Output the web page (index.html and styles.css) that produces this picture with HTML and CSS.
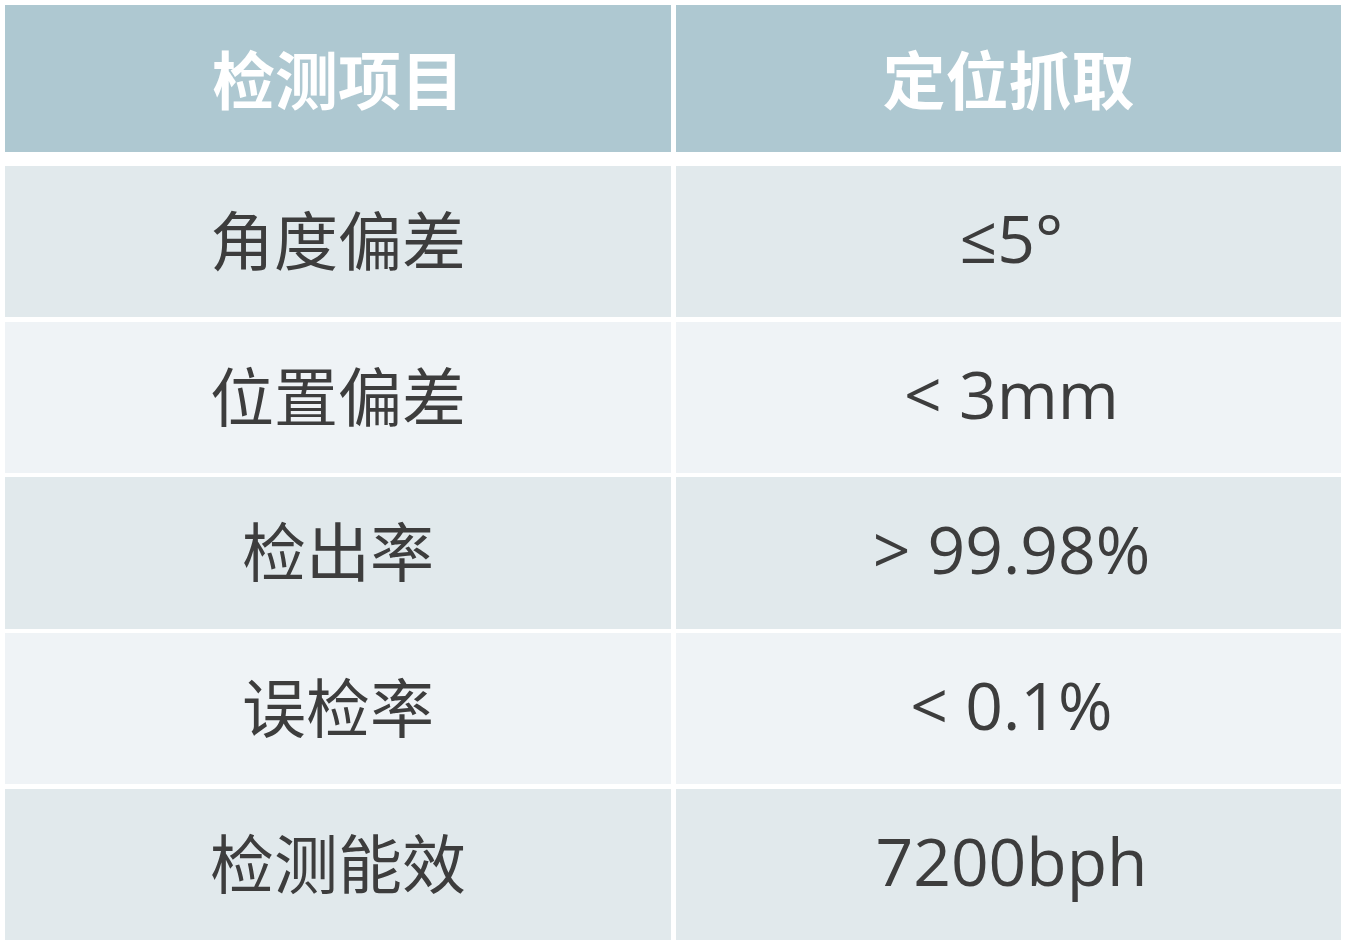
FILE: index.html
```html
<!DOCTYPE html>
<html lang="zh-CN">
<head>
<meta charset="utf-8">
<title>检测项目</title>
<link rel="stylesheet" href="styles.css">
</head>
<body>
<div class="table">
  <div class="head">
    <div class="cell th">检测项目</div>
    <div class="cell th">定位抓取</div>
  </div>
  <div class="body">
    <div class="row odd"><div class="cell">角度偏差</div><div class="cell num">≤5°</div></div>
    <div class="row even"><div class="cell">位置偏差</div><div class="cell num">&lt; 3mm</div></div>
    <div class="row odd"><div class="cell">检出率</div><div class="cell num">&gt; 99.98%</div></div>
    <div class="row even"><div class="cell">误检率</div><div class="cell num">&lt; 0.1%</div></div>
    <div class="row odd"><div class="cell">检测能效</div><div class="cell num">7200bph</div></div>
  </div>
</div>
</body>
</html>
```

FILE: styles.css
```css
html, body {
  margin: 0;
  padding: 0;
  background: #ffffff;
}
body {
  padding: 5px 13px 7px 5px;
  width: 1336px;
  font-family: "Open Sans", "Noto Sans CJK SC", sans-serif;
  color: #3d3d3d;
}
.table {
  display: flex;
  flex-direction: column;
  gap: 14px;
  height: 935px;
}
.head, .row {
  display: grid;
  grid-template-columns: 666px 665px;
  column-gap: 5px;
}
.head {
  height: 147px;
}
.body {
  flex: 1;
  display: grid;
  grid-template-rows: repeat(5, 1fr);
  row-gap: 4.5px;
}
.cell {
  display: flex;
  align-items: center;
  justify-content: center;
  font-size: 64px;
  line-height: 1;
  padding-bottom: 9px;
  font-family: "Noto Sans CJK SC", sans-serif;
}
.th {
  background: #aec8d1;
  color: #ffffff;
  font-weight: 700;
  padding-bottom: 4px;
  font-size: 63px;
}
.odd .cell { background: #e1e9ec; }
.even .cell { background: #eff3f6; }
.num {
  font-family: "Open Sans", "Noto Sans CJK SC", sans-serif;
  font-size: 66px;
  padding-left: 6px;
}
```
